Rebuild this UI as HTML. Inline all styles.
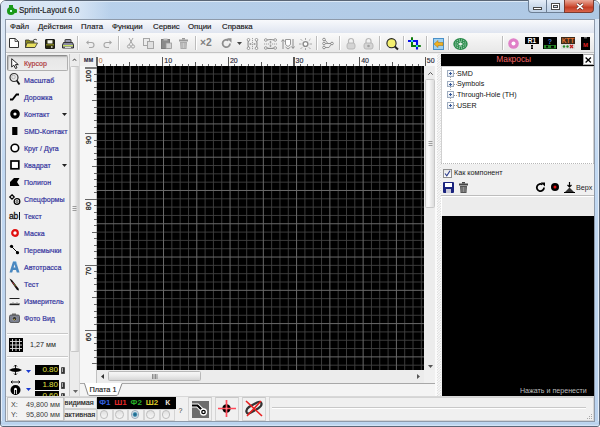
<!DOCTYPE html>
<html><head><meta charset="utf-8">
<style>
*{box-sizing:border-box;margin:0;padding:0}
html,body{width:600px;height:427px;overflow:hidden;background:#fff}
body{position:relative;font-family:"Liberation Sans",sans-serif}
.a{position:absolute}
.t{position:absolute;white-space:nowrap;line-height:1}
svg{overflow:visible}
</style></head><body>
<div class="a" style="left:0px;top:0px;width:600px;height:427px;background:linear-gradient(#dce8f6 0,#d4e3f4 100px,#c2d9f2 160px,#bad2ee 427px);border:1px solid #5a6676;border-radius:6px 6px 3px 3px;box-shadow:inset 1px 0 0 #e6eef8,inset -1px 0 0 #e6eef8"></div>
<div class="a" style="left:1px;top:1px;width:598px;height:18px;background:linear-gradient(90deg,#bad2ec,#b4cde8 50%,#aec8e4);border-radius:5px 5px 0 0;box-shadow:inset 0 1px 0 #dce9f6"></div>
<div class="a" style="left:1px;top:421px;width:598px;height:5px;background:linear-gradient(#c4dcf2,#b6d0ec 60%,#dceaf8);border-radius:0 0 2px 2px"></div>
<div class="a" style="left:1px;top:1px;width:110px;height:18px;background:linear-gradient(90deg,rgba(220,232,246,0.9) 0,rgba(220,232,246,0.85) 70%,rgba(220,232,246,0) 100%);border-radius:5px 0 0 0"></div>
<svg class="a" style="left:5.5px;top:5px" width="12" height="10" viewBox="0 0 12 10"><circle cx="5" cy="6" r="4" fill="#1a9a1a"/><rect x="3" y="0" width="4" height="4" fill="#1a9a1a"/><rect x="7" y="4" width="4" height="4" rx="1" fill="#1a9a1a"/><rect x="4" y="5" width="2" height="2" fill="#cfe"/></svg>
<div class="t" style="left:19.2px;top:5.9px;font-size:9px;color:#1e1e1e;-webkit-text-stroke:0.15px #111;transform:scaleX(0.88);transform-origin:left">Sprint-Layout 6.0</div>
<div class="a" style="left:528px;top:0px;width:37px;height:13px;border:1px solid #6d7f95;border-top:none;border-radius:0 0 0 4px;background:linear-gradient(#e6eef8,#cddbeb 50%,#c0d2e8)"></div>
<div class="a" style="left:546px;top:0px;width:1px;height:13px;background:#6d7f95"></div>
<div class="a" style="left:564px;top:0px;width:30px;height:13px;border:1px solid #7a3b30;border-top:none;border-radius:0 0 4px 0;background:linear-gradient(#eaa898,#d0553c 50%,#c23c24 60%,#d9644a)"></div>
<div class="a" style="left:533px;top:7px;width:9px;height:3px;background:#fff;border:1px solid #4a4a4a"></div>
<div class="a" style="left:551px;top:3px;width:9px;height:7px;border:1px solid #4a4a4a;background:#fff"></div>
<div class="a" style="left:553px;top:5px;width:5px;height:3px;border:1px solid #4a4a4a;background:#cfdcec"></div>
<svg class="a" style="left:575.5px;top:3.2px" width="8" height="7" viewBox="0 0 8 7"><path d="M1 0.8L7 6.2M7 0.8L1 6.2" stroke="#5a1a10" stroke-width="2.8"/><path d="M1 0.8L7 6.2M7 0.8L1 6.2" stroke="#fff" stroke-width="1.7"/></svg>
<div class="a" style="left:4.5px;top:18.5px;width:590.5px;height:403px;background:#f0f0f0;border:1px solid #8e9aaa;box-shadow:inset 1px 0 0 #fff,inset 0 -1px 0 #fff"></div>
<div class="a" style="left:6px;top:20px;width:588px;height:13px;background:linear-gradient(#f8f9fc,#e9edf5 60%,#dfe5f0)"></div>
<div class="t" style="left:10px;top:22.6px;font-size:7.8px;color:#161616;-webkit-text-stroke:0.15px #161616">Файл</div>
<div class="t" style="left:38px;top:22.6px;font-size:7.8px;color:#161616;-webkit-text-stroke:0.15px #161616">Действия</div>
<div class="t" style="left:81px;top:22.6px;font-size:7.8px;color:#161616;-webkit-text-stroke:0.15px #161616">Плата</div>
<div class="t" style="left:112px;top:22.6px;font-size:7.8px;color:#161616;-webkit-text-stroke:0.15px #161616">Функции</div>
<div class="t" style="left:153px;top:22.6px;font-size:7.8px;color:#161616;-webkit-text-stroke:0.15px #161616">Сервис</div>
<div class="t" style="left:188px;top:22.6px;font-size:7.8px;color:#161616;-webkit-text-stroke:0.15px #161616">Опции</div>
<div class="t" style="left:222px;top:22.6px;font-size:7.8px;color:#161616;-webkit-text-stroke:0.15px #161616">Справка</div>
<div class="a" style="left:6px;top:33px;width:588px;height:20px;background:linear-gradient(#fafafa,#f0f0f0 50%,#e8e8e8);border-bottom:1px solid #c4c4c4"></div>
<div class="a" style="left:77.0px;top:36px;width:1px;height:14px;background:#bcbcbc"></div>
<div class="a" style="left:78.0px;top:36px;width:1px;height:14px;background:#fff"></div>
<div class="a" style="left:118.0px;top:36px;width:1px;height:14px;background:#bcbcbc"></div>
<div class="a" style="left:119.0px;top:36px;width:1px;height:14px;background:#fff"></div>
<div class="a" style="left:194.5px;top:36px;width:1px;height:14px;background:#bcbcbc"></div>
<div class="a" style="left:195.5px;top:36px;width:1px;height:14px;background:#fff"></div>
<div class="a" style="left:315.5px;top:36px;width:1px;height:14px;background:#bcbcbc"></div>
<div class="a" style="left:316.5px;top:36px;width:1px;height:14px;background:#fff"></div>
<div class="a" style="left:338.5px;top:36px;width:1px;height:14px;background:#bcbcbc"></div>
<div class="a" style="left:339.5px;top:36px;width:1px;height:14px;background:#fff"></div>
<div class="a" style="left:378.5px;top:36px;width:1px;height:14px;background:#bcbcbc"></div>
<div class="a" style="left:379.5px;top:36px;width:1px;height:14px;background:#fff"></div>
<div class="a" style="left:402.5px;top:36px;width:1px;height:14px;background:#bcbcbc"></div>
<div class="a" style="left:403.5px;top:36px;width:1px;height:14px;background:#fff"></div>
<div class="a" style="left:425.5px;top:36px;width:1px;height:14px;background:#bcbcbc"></div>
<div class="a" style="left:426.5px;top:36px;width:1px;height:14px;background:#fff"></div>
<div class="a" style="left:447.5px;top:36px;width:1px;height:14px;background:#bcbcbc"></div>
<div class="a" style="left:448.5px;top:36px;width:1px;height:14px;background:#fff"></div>
<div class="a" style="left:502.0px;top:36px;width:1px;height:14px;background:#bcbcbc"></div>
<div class="a" style="left:503.0px;top:36px;width:1px;height:14px;background:#fff"></div>
<svg class="a" style="left:9px;top:38px" width="10" height="10" viewBox="0 0 10 10"><path d="M0.5 0.5H6L9.5 3.5V9.5H0.5Z" fill="#fff" stroke="#333" stroke-width="1"/><path d="M6 0.5V3.5H9.5" fill="none" stroke="#333" stroke-width="0.8"/></svg>
<svg class="a" style="left:25px;top:38px" width="13" height="10" viewBox="0 0 13 10"><path d="M0.5 2H4L5 3H9V9.5H0.5Z" fill="#8a8a20" stroke="#333" stroke-width="0.8"/><path d="M2 5H12.5L10 9.5H0.5Z" fill="#e8e060" stroke="#333" stroke-width="0.8"/><path d="M8 2.5Q10 0 12 2" stroke="#333" fill="none" stroke-width="0.9"/></svg>
<svg class="a" style="left:44.5px;top:38.5px" width="10" height="10" viewBox="0 0 10 10"><rect x="0.5" y="0.5" width="9" height="9" rx="0.5" fill="#2a2a10" stroke="#1a1a1a" stroke-width="1"/><rect x="2.5" y="1.2" width="5" height="3.3" fill="#f4f4e8"/><rect x="1" y="5.2" width="8" height="1.2" fill="#8a8a20"/><rect x="6" y="7.3" width="1.5" height="1.4" fill="#eee"/></svg>
<svg class="a" style="left:61.5px;top:38.5px" width="12" height="10" viewBox="0 0 12 10"><path d="M3 3V1Q3 0.5 3.5 0.5H8.5Q9 0.5 9 1V3" fill="#9a9ab0" stroke="#333" stroke-width="0.9"/><path d="M1.5 3.5H10.5L11.5 6V9H0.5V6Z" fill="#8a8aa0" stroke="#222" stroke-width="0.9"/><rect x="1" y="6" width="10" height="1.3" fill="#c8e060"/><rect x="3" y="8" width="6" height="1" fill="#ddd"/></svg>
<svg class="a" style="left:86px;top:39.5px" width="9" height="8" viewBox="0 0 9 8"><path d="M2 2.5H5.5A2.5 2.5 0 0 1 5.5 7.5H3" stroke="#a6a6a6" stroke-width="1.1" fill="none"/><path d="M0 2.5L2.5 0.3V4.7Z" fill="#a6a6a6"/></svg>
<svg class="a" style="left:103px;top:39.5px" width="9" height="8" viewBox="0 0 9 8"><path d="M7 2.5H3.5A2.5 2.5 0 0 0 3.5 7.5H6" stroke="#a6a6a6" stroke-width="1.1" fill="none"/><path d="M9 2.5L6.5 0.3V4.7Z" fill="#a6a6a6"/></svg>
<svg class="a" style="left:127px;top:38px" width="8" height="11" viewBox="0 0 8 11"><path d="M2 0L6 7M6 0L2 7" stroke="#a6a6a6" stroke-width="1"/><circle cx="2" cy="8.5" r="1.6" fill="none" stroke="#a6a6a6" stroke-width="1"/><circle cx="6" cy="8.5" r="1.6" fill="none" stroke="#a6a6a6" stroke-width="1"/></svg>
<svg class="a" style="left:143px;top:38px" width="11" height="11" viewBox="0 0 11 11"><rect x="0.5" y="0.5" width="6" height="7" fill="#ececec" stroke="#a6a6a6"/><rect x="4.5" y="3.5" width="6" height="7" fill="#e0e0e0" stroke="#a6a6a6"/></svg>
<svg class="a" style="left:161px;top:38px" width="11" height="11" viewBox="0 0 11 11"><rect x="0.5" y="1.5" width="8" height="9" fill="#8a8a8a" stroke="#7a7a7a"/><rect x="2.5" y="0.5" width="4" height="2" fill="#bbb"/><rect x="5" y="5" width="5.5" height="5.5" fill="#d4d4d4" stroke="#999" stroke-width="0.8"/></svg>
<svg class="a" style="left:179px;top:38px" width="9" height="11" viewBox="0 0 9 11"><rect x="3" y="0" width="3" height="1.5" fill="#999"/><rect x="0" y="1.5" width="9" height="2" fill="#999"/><path d="M1 4H8L7.5 11H1.5Z" fill="#aaa"/><path d="M3 5V10M4.5 5V10M6 5V10" stroke="#e0e0e0" stroke-width="0.6"/></svg>
<div class="t" style="left:200px;top:38.3px;font-size:10.3px;font-weight:bold;color:#808080">×2</div>
<svg class="a" style="left:221px;top:38px" width="11" height="11" viewBox="0 0 11 11"><path d="M9 5.5A3.7 3.7 0 1 1 7.5 2.5" stroke="#8e8e8e" stroke-width="1.8" fill="none"/><path d="M6 0.3L10.5 0.3L10.5 4.8Z" fill="#8e8e8e"/></svg>
<svg class="a" style="left:237px;top:42px" width="5" height="3" viewBox="0 0 5 3"><path d="M0 0H5L2.5 3Z" fill="#444"/></svg>
<svg class="a" style="left:246px;top:38px" width="13" height="12" viewBox="0 0 13 12"><path d="M6.5 0V12" stroke="#8c8c8c" stroke-width="0.8" stroke-dasharray="1.2 0.8"/><path d="M2.5 2.5Q1.5 6 2.5 9.5M10.5 2.5Q11.5 6 10.5 9.5" stroke="#8c8c8c" stroke-width="1.1" fill="none"/><circle cx="2.5" cy="1.8" r="1.3" fill="#fff" stroke="#8c8c8c" stroke-width="0.9"/><circle cx="2.5" cy="10.2" r="1.3" fill="#fff" stroke="#8c8c8c" stroke-width="0.9"/><circle cx="10.5" cy="1.8" r="1.3" fill="#fff" stroke="#8c8c8c" stroke-width="0.9"/><circle cx="10.5" cy="10.2" r="1.3" fill="#fff" stroke="#8c8c8c" stroke-width="0.9"/><path d="M3.8 6H5.6M7.4 6H9.2M4.6 5L3.8 6L4.6 7M8.4 5L9.2 6L8.4 7" stroke="#8c8c8c" stroke-width="0.8" fill="none"/></svg>
<svg class="a" style="left:264px;top:38px" width="13" height="12" viewBox="0 0 13 12"><path d="M0 6H13" stroke="#8c8c8c" stroke-width="0.8" stroke-dasharray="1.2 0.8"/><path d="M2.5 2Q6.5 1 10.5 2M2.5 10Q6.5 11 10.5 10" stroke="#8c8c8c" stroke-width="1.1" fill="none"/><circle cx="1.8" cy="2" r="1.3" fill="#fff" stroke="#8c8c8c" stroke-width="0.9"/><circle cx="11.2" cy="2" r="1.3" fill="#fff" stroke="#8c8c8c" stroke-width="0.9"/><circle cx="1.8" cy="10" r="1.3" fill="#fff" stroke="#8c8c8c" stroke-width="0.9"/><circle cx="11.2" cy="10" r="1.3" fill="#fff" stroke="#8c8c8c" stroke-width="0.9"/><path d="M6.5 3.3V5M6.5 7V8.7M5.5 4.1L6.5 3.3L7.5 4.1M5.5 7.9L6.5 8.7L7.5 7.9" stroke="#8c8c8c" stroke-width="0.8" fill="none"/></svg>
<svg class="a" style="left:281px;top:38px" width="14" height="12" viewBox="0 0 14 12"><path d="M2 11V2M0.5 3.5L2 1.5L3.5 3.5M12 1V10M10.5 8.5L12 10.5L13.5 8.5" stroke="#8c8c8c" stroke-width="1" fill="none"/><path d="M4.5 1.5H9.5V6.5L7 8.5L4.5 6.5Z" fill="#fff" stroke="#8c8c8c" stroke-width="0.9"/><path d="M4.5 9L7 11L9.5 9" stroke="#8c8c8c" stroke-width="0.9" fill="none"/></svg>
<svg class="a" style="left:299px;top:38px" width="13" height="12" viewBox="0 0 13 12"><circle cx="6.5" cy="6" r="2.4" fill="#fff" stroke="#8c8c8c" stroke-width="1.4"/><path d="M6.5 0V2M6.5 10V12M0 6H2.5M10.5 6H13M1.5 1L3.2 2.7M11.5 1L9.8 2.7M1.5 11L3.2 9.3M11.5 11L9.8 9.3" stroke="#a0a0a0" stroke-width="0.9"/></svg>
<svg class="a" style="left:322px;top:38px" width="12" height="11" viewBox="0 0 12 11"><circle cx="2" cy="1.5" r="1.3" fill="#fff" stroke="#8c8c8c"/><circle cx="2" cy="5.5" r="1.3" fill="#fff" stroke="#8c8c8c"/><circle cx="2" cy="9.5" r="1.3" fill="#fff" stroke="#8c8c8c"/><circle cx="10" cy="5.5" r="1.3" fill="#fff" stroke="#8c8c8c"/><path d="M3 2L6 5.5H9M3.3 5.5H9M3 9.5H7L9 6.5" stroke="#8c8c8c" fill="none" stroke-width="0.9"/></svg>
<svg class="a" style="left:346px;top:38px" width="10" height="11" viewBox="0 0 10 11"><path d="M2.5 5V3A2.5 2.5 0 0 1 7.5 3V5" stroke="#b8b8b8" stroke-width="1.2" fill="none"/><rect x="1" y="5" width="8" height="6" rx="2" fill="#d4d4d4" stroke="#b0b0b0" stroke-width="0.8"/></svg>
<svg class="a" style="left:363px;top:38px" width="11" height="11" viewBox="0 0 11 11"><path d="M3 5V3A2.5 2.5 0 0 1 8 3V5" stroke="#b8b8b8" stroke-width="1.2" fill="none"/><rect x="1" y="5" width="9" height="6" rx="2" fill="#d4d4d4" stroke="#b0b0b0" stroke-width="0.8"/><circle cx="5.5" cy="8" r="1.3" fill="#a0a0a0"/></svg>
<svg class="a" style="left:386px;top:38px" width="13" height="12" viewBox="0 0 13 12"><circle cx="5.5" cy="5.2" r="4.6" fill="#f4f070" stroke="#222" stroke-width="1.1"/><path d="M8.7 8.5L12 11.5" stroke="#222" stroke-width="2"/></svg>
<svg class="a" style="left:404px;top:35px" width="22" height="16" viewBox="0 0 22 16"><path d="M8 2.3V11H16.8" stroke="#0a7a0a" stroke-width="2" fill="none"/><path d="M4 6H13V14.6" stroke="#0a10e8" stroke-width="2.1" fill="none"/><rect x="7" y="5" width="2" height="2" fill="#40d0f0"/><rect x="12" y="10" width="2" height="2" fill="#40e0d0"/></svg>
<svg class="a" style="left:433px;top:38px" width="11" height="12" viewBox="0 0 11 12"><rect x="0.5" y="0.5" width="10" height="11" fill="#9ed0f0" stroke="#4a90c8" stroke-width="1"/><path d="M1 6L5 2.5V4.5H10V7.5H5V9.5Z" fill="#f0b020" stroke="#a07010" stroke-width="0.5"/></svg>
<svg class="a" style="left:453px;top:38px" width="15" height="12" viewBox="0 0 15 12"><ellipse cx="7.5" cy="6" rx="7.2" ry="6" fill="#2a8a4a"/><circle cx="12.70" cy="6.00" r="0.55" fill="#b8e0c8"/><circle cx="12.19" cy="7.92" r="0.55" fill="#b8e0c8"/><circle cx="10.74" cy="9.46" r="0.55" fill="#b8e0c8"/><circle cx="8.66" cy="10.31" r="0.55" fill="#b8e0c8"/><circle cx="6.34" cy="10.31" r="0.55" fill="#b8e0c8"/><circle cx="4.26" cy="9.46" r="0.55" fill="#b8e0c8"/><circle cx="2.81" cy="7.92" r="0.55" fill="#b8e0c8"/><circle cx="2.30" cy="6.00" r="0.55" fill="#b8e0c8"/><circle cx="2.81" cy="4.08" r="0.55" fill="#b8e0c8"/><circle cx="4.26" cy="2.54" r="0.55" fill="#b8e0c8"/><circle cx="6.34" cy="1.69" r="0.55" fill="#b8e0c8"/><circle cx="8.66" cy="1.69" r="0.55" fill="#b8e0c8"/><circle cx="10.74" cy="2.54" r="0.55" fill="#b8e0c8"/><circle cx="12.19" cy="4.08" r="0.55" fill="#b8e0c8"/><circle cx="11.10" cy="6.00" r="0.55" fill="#b8e0c8"/><circle cx="10.41" cy="7.80" r="0.55" fill="#b8e0c8"/><circle cx="8.61" cy="8.91" r="0.55" fill="#b8e0c8"/><circle cx="6.39" cy="8.91" r="0.55" fill="#b8e0c8"/><circle cx="4.59" cy="7.80" r="0.55" fill="#b8e0c8"/><circle cx="3.90" cy="6.00" r="0.55" fill="#b8e0c8"/><circle cx="4.59" cy="4.20" r="0.55" fill="#b8e0c8"/><circle cx="6.39" cy="3.09" r="0.55" fill="#b8e0c8"/><circle cx="8.61" cy="3.09" r="0.55" fill="#b8e0c8"/><circle cx="10.41" cy="4.20" r="0.55" fill="#b8e0c8"/><circle cx="7.5" cy="6" r="1.6" fill="#e8f4ec"/><path d="M7.5 3.5V4.3M7.5 7.7V8.5M5 6H5.8M9.2 6H10" stroke="#e8f4ec" stroke-width="0.8"/></svg>
<svg class="a" style="left:508px;top:38px" width="11" height="11" viewBox="0 0 11 11"><circle cx="5.5" cy="5.5" r="5.3" fill="#e080c8"/><circle cx="5.5" cy="5.5" r="2" fill="#fff"/></svg>
<svg class="a" style="left:525px;top:37px" width="14" height="12" viewBox="0 0 14 12"><rect x="0" y="0" width="14" height="7" fill="#000"/><text x="7" y="6.2" font-family="Liberation Sans" font-size="6.5" font-weight="bold" fill="#fff" text-anchor="middle">R1</text><rect x="6" y="8" width="2" height="4" fill="#000"/><rect x="6" y="9.5" width="2" height="1" fill="#888"/></svg>
<svg class="a" style="left:543px;top:37px" width="14" height="12" viewBox="0 0 14 12"><rect x="0" y="0" width="14" height="12" fill="#000"/><text x="7" y="6.5" font-family="Liberation Sans" font-size="7" font-weight="bold" fill="#4a80d0" text-anchor="middle">?</text><rect x="1" y="8" width="12" height="3.5" fill="#2a8a2a"/><circle cx="4" cy="9.7" r="1.1" fill="#000"/><rect x="8" y="8.8" width="3" height="2" fill="#000"/></svg>
<svg class="a" style="left:561px;top:37px" width="14" height="12" viewBox="0 0 14 12"><rect x="0" y="0" width="14" height="7" fill="#3a2a1a"/><text x="7" y="6.2" font-family="Liberation Sans" font-size="6.5" font-weight="bold" fill="#e07030" text-anchor="middle">KTT</text><rect x="0" y="7" width="14" height="5" fill="#ddd"/><circle cx="3" cy="9.5" r="1.2" fill="#2a8a2a"/><circle cx="6.5" cy="9.5" r="1.2" fill="#2a8a2a"/><path d="M9 8L12 11M12 8L9 11" stroke="#c02020" stroke-width="1.3"/></svg>
<svg class="a" style="left:581px;top:37px" width="9" height="13" viewBox="0 0 9 13"><rect x="0" y="0" width="9" height="13" fill="#000"/><rect x="3" y="0" width="3" height="1.5" fill="#666"/><text x="4.5" y="9.5" font-family="Liberation Sans" font-size="6" font-weight="bold" fill="#e02020" text-anchor="middle">M</text></svg>
<div class="a" style="left:6px;top:54px;width:63px;height:342px;background:#f0f0f0"></div>
<div class="a" style="left:69px;top:54px;width:11px;height:342px;background:#ececec;border-left:1px solid #c4c4c4"></div>
<div class="a" style="left:70px;top:66px;width:9.5px;height:286px;background:linear-gradient(90deg,#f6f6f6,#f2f2f2 40%,#dadada 75%,#cfcfcf);border:1px solid #c8c8c8;border-radius:1.5px"></div>
<svg class="a" style="left:72px;top:57.5px" width="5" height="3" viewBox="0 0 5 3"><path d="M0.2 2.8L2.5 0.4L4.8 2.8L3.8 2.8L2.5 1.5L1.2 2.8Z" fill="#444"/></svg>
<svg class="a" style="left:72.5px;top:389.5px" width="5" height="3" viewBox="0 0 5 3"><path d="M0 0H5L2.5 3Z" fill="#666"/></svg>
<div class="a" style="left:79px;top:54px;width:1px;height:342px;background:#d8d8d8"></div>
<svg class="a" style="left:72px;top:206px" width="5" height="5" viewBox="0 0 5 5"><path d="M0.5 0.5H4.5M0.5 2.5H4.5M0.5 4.5H4.5" stroke="#888" stroke-width="0.8"/></svg>
<div class="a" style="left:7px;top:55.3px;width:61.3px;height:15.4px;border:1px solid #8c8c8c;border-bottom-color:#b0b0b0;border-right-color:#b0b0b0;border-radius:2px;background:linear-gradient(#dcdcdc,#e8e8e8 30%,#ececec);box-shadow:inset 1px 1px 1px rgba(0,0,0,0.18)"></div>
<div class="t" style="left:23.5px;top:59.9px;font-size:7.6px;color:#b03c40;-webkit-text-stroke:0.22px #b03c40;transform:scaleX(0.93);transform-origin:left">Курсор</div>
<div class="t" style="left:23.5px;top:76.89px;font-size:7.6px;color:#3838a0;-webkit-text-stroke:0.22px #3838a0;transform:scaleX(0.93);transform-origin:left">Масштаб</div>
<div class="t" style="left:23.5px;top:93.88px;font-size:7.6px;color:#3838a0;-webkit-text-stroke:0.22px #3838a0;transform:scaleX(0.93);transform-origin:left">Дорожка</div>
<div class="t" style="left:23.5px;top:110.87px;font-size:7.6px;color:#3838a0;-webkit-text-stroke:0.22px #3838a0;transform:scaleX(0.93);transform-origin:left">Контакт</div>
<div class="t" style="left:23.5px;top:127.86px;font-size:7.6px;color:#3838a0;-webkit-text-stroke:0.22px #3838a0;transform:scaleX(0.93);transform-origin:left">SMD-Контакт</div>
<div class="t" style="left:23.5px;top:144.85px;font-size:7.6px;color:#3838a0;-webkit-text-stroke:0.22px #3838a0;transform:scaleX(0.93);transform-origin:left">Круг / Дуга</div>
<div class="t" style="left:23.5px;top:161.84px;font-size:7.6px;color:#3838a0;-webkit-text-stroke:0.22px #3838a0;transform:scaleX(0.93);transform-origin:left">Квадрат</div>
<div class="t" style="left:23.5px;top:178.83px;font-size:7.6px;color:#3838a0;-webkit-text-stroke:0.22px #3838a0;transform:scaleX(0.93);transform-origin:left">Полигон</div>
<div class="t" style="left:23.5px;top:195.82px;font-size:7.6px;color:#3838a0;-webkit-text-stroke:0.22px #3838a0;transform:scaleX(0.93);transform-origin:left">Спецформы</div>
<div class="t" style="left:23.5px;top:212.81px;font-size:7.6px;color:#3838a0;-webkit-text-stroke:0.22px #3838a0;transform:scaleX(0.93);transform-origin:left">Текст</div>
<div class="t" style="left:23.5px;top:229.8px;font-size:7.6px;color:#3838a0;-webkit-text-stroke:0.22px #3838a0;transform:scaleX(0.93);transform-origin:left">Маска</div>
<div class="t" style="left:23.5px;top:246.79px;font-size:7.6px;color:#3838a0;-webkit-text-stroke:0.22px #3838a0;transform:scaleX(0.93);transform-origin:left">Перемычки</div>
<div class="t" style="left:23.5px;top:263.78px;font-size:7.6px;color:#3838a0;-webkit-text-stroke:0.22px #3838a0;transform:scaleX(0.93);transform-origin:left">Автотрасса</div>
<div class="t" style="left:23.5px;top:280.77px;font-size:7.6px;color:#3838a0;-webkit-text-stroke:0.22px #3838a0;transform:scaleX(0.93);transform-origin:left">Тест</div>
<div class="t" style="left:23.5px;top:297.76px;font-size:7.6px;color:#3838a0;-webkit-text-stroke:0.22px #3838a0;transform:scaleX(0.93);transform-origin:left">Измеритель</div>
<div class="t" style="left:23.5px;top:314.75px;font-size:7.6px;color:#3838a0;-webkit-text-stroke:0.22px #3838a0;transform:scaleX(0.93);transform-origin:left">Фото Вид</div>
<svg class="a" style="left:11px;top:58px" width="8" height="11" viewBox="0 0 8 11"><path d="M0.7 0.7V9L2.8 7.2L4.5 10.5L6 9.8L4.4 6.6H7.3Z" fill="#fff" stroke="#222" stroke-width="1"/></svg>
<svg class="a" style="left:9px;top:72px" width="11" height="14" viewBox="0 0 11 14"><circle cx="5" cy="5.5" r="4" fill="#e8e8e8" stroke="#333" stroke-width="1.2"/><circle cx="4.5" cy="5" r="1.8" fill="none" stroke="#999" stroke-width="0.6"/><path d="M7.8 8.5L10.5 12.5" stroke="#111" stroke-width="1.8"/></svg>
<svg class="a" style="left:9px;top:93px" width="11" height="8" viewBox="0 0 11 8"><path d="M1 6.5H3.5L7.5 1.5H10" stroke="#000" stroke-width="1.8" fill="none"/></svg>
<svg class="a" style="left:10px;top:109px" width="10" height="10" viewBox="0 0 10 10"><circle cx="5" cy="5" r="3.2" fill="#fff" stroke="#000" stroke-width="3.2"/></svg>
<svg class="a" style="left:12px;top:127px" width="6" height="8" viewBox="0 0 6 8"><rect x="0.2" y="0" width="5.2" height="8" fill="#000"/></svg>
<svg class="a" style="left:10px;top:143px" width="10" height="10" viewBox="0 0 10 10"><circle cx="4.9" cy="5" r="3.8" fill="#fff" stroke="#000" stroke-width="1.6"/></svg>
<svg class="a" style="left:10px;top:160px" width="10" height="10" viewBox="0 0 10 10"><rect x="1" y="1" width="7.8" height="7.8" fill="#fff" stroke="#000" stroke-width="1.7"/></svg>
<svg class="a" style="left:9px;top:177px" width="11" height="10" viewBox="0 0 11 10"><path d="M1 5L5 1H10.5L8 5L10.5 9H1Z" fill="#000"/></svg>
<svg class="a" style="left:9px;top:194px" width="12" height="11" viewBox="0 0 12 11"><path d="M3 0.8L5.2 3L3 5.2L0.8 3Z" fill="#fff" stroke="#000" stroke-width="1.3"/><circle cx="8" cy="7.5" r="2.8" fill="#fff" stroke="#000" stroke-width="1.3"/><circle cx="8" cy="7.5" r="1" fill="none" stroke="#000" stroke-width="0.7"/></svg>
<div class="t" style="left:9px;top:211.8px;font-size:8.5px;color:#111;letter-spacing:-0.3px;-webkit-text-stroke:0.3px #111">ab</div>
<div class="a" style="left:19px;top:212px;width:1px;height:8px;background:#111"></div>
<svg class="a" style="left:11px;top:229px" width="8" height="8" viewBox="0 0 8 8"><circle cx="4" cy="4" r="2.8" fill="#fff" stroke="#e01010" stroke-width="2.2"/></svg>
<svg class="a" style="left:9px;top:244px" width="11" height="11" viewBox="0 0 11 11"><path d="M2.5 2.5L8.5 8.5" stroke="#000" stroke-width="1"/><circle cx="2.5" cy="2.3" r="1.6" fill="#000"/><circle cx="8.5" cy="8.7" r="1.6" fill="#000"/></svg>
<svg class="a" style="left:9px;top:261px" width="11" height="12" viewBox="0 0 11 12"><path d="M0.5 11.5L4 0.5H7L10.5 11.5H7.8L7 9H4L3.2 11.5Z" fill="#4a88c0"/><path d="M4.6 6.5H6.4L5.5 3.3Z" fill="#f0f0f0"/><path d="M4 0.5H7L8 4" stroke="#8ac0e8" stroke-width="0.6" fill="none"/></svg>
<svg class="a" style="left:9px;top:278px" width="11" height="13" viewBox="0 0 11 13"><path d="M0.5 0.5L3 2L9.5 10.5L10 12.5L8 12L2 3.5Z" fill="#111"/><path d="M3.5 4.5L7 8.5" stroke="#c03030" stroke-width="1"/><circle cx="6" cy="7" r="0.7" fill="#30a030"/></svg>
<svg class="a" style="left:9px;top:297px" width="11" height="9" viewBox="0 0 11 9"><path d="M0.5 1.5H10.5" stroke="#222" stroke-width="1"/><path d="M0.5 7.5H10.5" stroke="#222" stroke-width="1.3"/><path d="M2 6V7M4 5.5V7M6 6V7M8 5.5V7M10 6V7" stroke="#222" stroke-width="0.8"/></svg>
<svg class="a" style="left:9px;top:313px" width="11" height="10" viewBox="0 0 11 10"><rect x="0.5" y="2" width="10" height="7.5" rx="1.5" fill="#7a7f90" stroke="#444" stroke-width="0.8"/><rect x="3" y="0.5" width="4" height="2" fill="#666"/><circle cx="5.5" cy="5.7" r="2.2" fill="#333" stroke="#bbb" stroke-width="0.6"/><circle cx="5.2" cy="6.5" r="0.7" fill="#e0c040"/></svg>
<svg class="a" style="left:61.5px;top:113.0px" width="5" height="3" viewBox="0 0 5 3"><path d="M0 0H5L2.5 3Z" fill="#222"/></svg>
<svg class="a" style="left:61.5px;top:164.1px" width="5" height="3" viewBox="0 0 5 3"><path d="M0 0H5L2.5 3Z" fill="#222"/></svg>
<div class="a" style="left:7px;top:333px;width:61px;height:1px;background:#c8c8c8"></div>
<div class="a" style="left:7px;top:334px;width:61px;height:1px;background:#fff"></div>
<div class="a" style="left:7px;top:356px;width:61px;height:1px;background:#c8c8c8"></div>
<div class="a" style="left:7px;top:357px;width:61px;height:1px;background:#fff"></div>
<svg class="a" style="left:9px;top:338px" width="14" height="14" viewBox="0 0 14 14"><rect width="14" height="14" fill="#000"/><path d="M3.5 1V13M7 1V13M10.5 1V13M1 3.5H13M1 7H13M1 10.5H13" stroke="#ddd" stroke-width="0.9"/></svg>
<div class="t" style="left:30px;top:341.3px;font-size:7.2px;color:#222">1,27 мм</div>
<div class="a" style="left:35px;top:365px;width:24px;height:10px;background:#000"></div>
<div class="t" style="left:35px;top:366.2px;width:23px;text-align:right;font-size:8px;color:#e0e040">0.80</div>
<div class="a" style="left:61px;top:366.5px;width:3.5px;height:7px;background:#333;border-radius:1.5px;box-shadow:inset 0 0 0 0.8px #555"></div>
<div class="a" style="left:62.2px;top:368px;width:1.1px;height:4px;background:#aaa"></div>
<div class="a" style="left:35px;top:380px;width:24px;height:10px;background:#000"></div>
<div class="t" style="left:35px;top:381.2px;width:23px;text-align:right;font-size:8px;color:#e0e040">1.80</div>
<div class="a" style="left:61px;top:381.5px;width:3.5px;height:7px;background:#333;border-radius:1.5px;box-shadow:inset 0 0 0 0.8px #555"></div>
<div class="a" style="left:62.2px;top:383px;width:1.1px;height:4px;background:#aaa"></div>
<div class="a" style="left:35px;top:391px;width:24px;height:10px;background:#000"></div>
<div class="t" style="left:35px;top:392.2px;width:23px;text-align:right;font-size:8px;color:#e0e040">0.60</div>
<div class="a" style="left:61px;top:392.5px;width:3.5px;height:7px;background:#333;border-radius:1.5px;box-shadow:inset 0 0 0 0.8px #555"></div>
<div class="a" style="left:62.2px;top:394px;width:1.1px;height:4px;background:#aaa"></div>
<svg class="a" style="left:9px;top:365px" width="13" height="10" viewBox="0 0 13 10"><path d="M0 5Q3 3 6.5 3Q10 3 13 5Q10 7 6.5 7Q3 7 0 5Z" fill="#000"/><path d="M6.5 0V3M6.5 7V10M5 1.5L6.5 0L8 1.5M5 8.5L6.5 10L8 8.5" stroke="#000" stroke-width="0.9" fill="none"/></svg>
<svg class="a" style="left:25.5px;top:369.5px" width="5" height="3" viewBox="0 0 5 3"><path d="M0 0H5L2.5 3Z" fill="#1a3ad0"/></svg>
<svg class="a" style="left:25.5px;top:387.5px" width="5" height="3" viewBox="0 0 5 3"><path d="M0 0H5L2.5 3Z" fill="#1a3ad0"/></svg>
<svg class="a" style="left:9px;top:380px" width="13" height="17" viewBox="0 0 13 17"><path d="M2 2H11M3.5 0.7L2 2L3.5 3.3M9.5 0.7L11 2L9.5 3.3" stroke="#000" stroke-width="0.9" fill="none"/><circle cx="6.5" cy="10" r="5" fill="#000"/><path d="M5 14V9.3Q5 7.8 6.5 7.8Q8 7.8 8 9.3V14Z" fill="#fff"/><rect x="5.8" y="10" width="1.4" height="5" fill="#000"/></svg>
<div class="a" style="left:80px;top:54px;width:357px;height:330px;background:#f0f0f0"></div>
<div class="a" style="left:97px;top:54px;width:340px;height:12px;background:#f8f8f8"></div>
<div class="a" style="left:80px;top:66px;width:17px;height:316.5px;background:#f6f6f6;border-right:1px solid #c0c0c0"></div>
<div class="t" style="left:83.8px;top:57.3px;font-size:6.5px;font-weight:bold;color:#2a2a40">мм</div>
<div class="a" style="left:85px;top:67.3px;width:12px;height:1.6px;background:#7a7a7a"></div>
<div class="a" style="left:96.4px;top:57px;width:1.4px;height:9px;background:#666"></div>
<svg class="a" style="left:97px;top:66px;overflow:hidden" width="327" height="304" viewBox="0 0 327 304"><rect width="327" height="304" fill="#000"/><path d="M8.30 0V304M16.62 0V304M24.93 0V304M41.57 0V304M49.89 0V304M58.20 0V304M74.84 0V304M83.15 0V304M91.47 0V304M108.10 0V304M116.42 0V304M124.74 0V304M141.37 0V304M149.69 0V304M158.01 0V304M174.64 0V304M182.96 0V304M191.27 0V304M207.91 0V304M216.23 0V304M224.54 0V304M241.18 0V304M249.49 0V304M257.81 0V304M274.44 0V304M282.76 0V304M291.08 0V304M307.71 0V304M316.03 0V304M324.35 0V304M0 8.00H327M0 16.32H327M0 32.96H327M0 41.28H327M0 49.60H327M0 66.24H327M0 74.56H327M0 82.88H327M0 99.52H327M0 107.84H327M0 116.16H327M0 132.80H327M0 141.12H327M0 149.44H327M0 166.08H327M0 174.40H327M0 182.72H327M0 199.36H327M0 207.68H327M0 216.00H327M0 232.64H327M0 240.96H327M0 249.28H327M0 265.92H327M0 274.24H327M0 282.56H327M0 299.20H327" stroke="#424242" stroke-width="0.9" fill="none"/><path d="M33.25 0V304M66.52 0V304M99.79 0V304M133.06 0V304M166.32 0V304M199.59 0V304M232.86 0V304M266.13 0V304M299.40 0V304M0 24.64H327M0 57.92H327M0 91.20H327M0 124.48H327M0 157.76H327M0 191.04H327M0 224.32H327M0 257.60H327M0 290.88H327" stroke="#6a6a6a" stroke-width="1" fill="none"/></svg>
<div class="a" style="left:103.06px;top:64.2px;width:1px;height:1.8px;background:#666"></div>
<div class="a" style="left:109.63px;top:64.2px;width:1px;height:1.8px;background:#666"></div>
<div class="a" style="left:116.19px;top:64.2px;width:1px;height:1.8px;background:#666"></div>
<div class="a" style="left:122.76px;top:64.2px;width:1px;height:1.8px;background:#666"></div>
<div class="a" style="left:129.32px;top:61.6px;width:1px;height:4.4px;background:#555"></div>
<div class="a" style="left:135.89px;top:64.2px;width:1px;height:1.8px;background:#666"></div>
<div class="a" style="left:142.46px;top:64.2px;width:1px;height:1.8px;background:#666"></div>
<div class="a" style="left:149.02px;top:64.2px;width:1px;height:1.8px;background:#666"></div>
<div class="a" style="left:155.59px;top:64.2px;width:1px;height:1.8px;background:#666"></div>
<div class="a" style="left:162.05px;top:57.3px;width:1.4px;height:8.7px;background:#555"></div>
<div class="t" style="left:164.25px;top:57.4px;font-size:7px;color:#2a2a3a;-webkit-text-stroke:0.15px #2a2a3a">10</div>
<div class="a" style="left:168.72px;top:64.2px;width:1px;height:1.8px;background:#666"></div>
<div class="a" style="left:175.28px;top:64.2px;width:1px;height:1.8px;background:#666"></div>
<div class="a" style="left:181.84px;top:64.2px;width:1px;height:1.8px;background:#666"></div>
<div class="a" style="left:188.41px;top:64.2px;width:1px;height:1.8px;background:#666"></div>
<div class="a" style="left:194.98px;top:61.6px;width:1px;height:4.4px;background:#555"></div>
<div class="a" style="left:201.54px;top:64.2px;width:1px;height:1.8px;background:#666"></div>
<div class="a" style="left:208.11px;top:64.2px;width:1px;height:1.8px;background:#666"></div>
<div class="a" style="left:214.67px;top:64.2px;width:1px;height:1.8px;background:#666"></div>
<div class="a" style="left:221.24px;top:64.2px;width:1px;height:1.8px;background:#666"></div>
<div class="a" style="left:227.7px;top:57.3px;width:1.4px;height:8.7px;background:#555"></div>
<div class="t" style="left:229.9px;top:57.4px;font-size:7px;color:#2a2a3a;-webkit-text-stroke:0.15px #2a2a3a">20</div>
<div class="a" style="left:234.37px;top:64.2px;width:1px;height:1.8px;background:#666"></div>
<div class="a" style="left:240.93px;top:64.2px;width:1px;height:1.8px;background:#666"></div>
<div class="a" style="left:247.5px;top:64.2px;width:1px;height:1.8px;background:#666"></div>
<div class="a" style="left:254.06px;top:64.2px;width:1px;height:1.8px;background:#666"></div>
<div class="a" style="left:260.62px;top:61.6px;width:1px;height:4.4px;background:#555"></div>
<div class="a" style="left:267.19px;top:64.2px;width:1px;height:1.8px;background:#666"></div>
<div class="a" style="left:273.75px;top:64.2px;width:1px;height:1.8px;background:#666"></div>
<div class="a" style="left:280.32px;top:64.2px;width:1px;height:1.8px;background:#666"></div>
<div class="a" style="left:286.88px;top:64.2px;width:1px;height:1.8px;background:#666"></div>
<div class="a" style="left:293.35px;top:57.3px;width:1.4px;height:8.7px;background:#555"></div>
<div class="t" style="left:295.55px;top:57.4px;font-size:7px;color:#2a2a3a;-webkit-text-stroke:0.15px #2a2a3a">30</div>
<div class="a" style="left:300.01px;top:64.2px;width:1px;height:1.8px;background:#666"></div>
<div class="a" style="left:306.58px;top:64.2px;width:1px;height:1.8px;background:#666"></div>
<div class="a" style="left:313.14px;top:64.2px;width:1px;height:1.8px;background:#666"></div>
<div class="a" style="left:319.71px;top:64.2px;width:1px;height:1.8px;background:#666"></div>
<div class="a" style="left:326.27px;top:61.6px;width:1px;height:4.4px;background:#555"></div>
<div class="a" style="left:332.84px;top:64.2px;width:1px;height:1.8px;background:#666"></div>
<div class="a" style="left:339.4px;top:64.2px;width:1px;height:1.8px;background:#666"></div>
<div class="a" style="left:345.97px;top:64.2px;width:1px;height:1.8px;background:#666"></div>
<div class="a" style="left:352.54px;top:64.2px;width:1px;height:1.8px;background:#666"></div>
<div class="a" style="left:359.0px;top:57.3px;width:1.4px;height:8.7px;background:#555"></div>
<div class="t" style="left:361.2px;top:57.4px;font-size:7px;color:#2a2a3a;-webkit-text-stroke:0.15px #2a2a3a">40</div>
<div class="a" style="left:365.67px;top:64.2px;width:1px;height:1.8px;background:#666"></div>
<div class="a" style="left:372.23px;top:64.2px;width:1px;height:1.8px;background:#666"></div>
<div class="a" style="left:378.8px;top:64.2px;width:1px;height:1.8px;background:#666"></div>
<div class="a" style="left:385.36px;top:64.2px;width:1px;height:1.8px;background:#666"></div>
<div class="a" style="left:391.93px;top:61.6px;width:1px;height:4.4px;background:#555"></div>
<div class="a" style="left:398.49px;top:64.2px;width:1px;height:1.8px;background:#666"></div>
<div class="a" style="left:405.06px;top:64.2px;width:1px;height:1.8px;background:#666"></div>
<div class="a" style="left:411.62px;top:64.2px;width:1px;height:1.8px;background:#666"></div>
<div class="a" style="left:418.19px;top:64.2px;width:1px;height:1.8px;background:#666"></div>
<div class="a" style="left:424.65px;top:57.3px;width:1.4px;height:8.7px;background:#555"></div>
<div class="t" style="left:426.85px;top:57.4px;font-size:7px;color:#2a2a3a;-webkit-text-stroke:0.15px #2a2a3a">50</div>
<div class="t" style="left:98.8px;top:57.2px;font-size:7px;color:#b86a30">0</div>
<div class="a" style="left:94px;top:74.07px;width:3px;height:1px;background:#666"></div>
<div class="a" style="left:94px;top:80.64px;width:3px;height:1px;background:#666"></div>
<div class="a" style="left:94px;top:87.21px;width:3px;height:1px;background:#666"></div>
<div class="a" style="left:94px;top:93.78px;width:3px;height:1px;background:#666"></div>
<div class="a" style="left:92px;top:100.35px;width:5px;height:1px;background:#666"></div>
<div class="a" style="left:94px;top:106.92px;width:3px;height:1px;background:#666"></div>
<div class="a" style="left:94px;top:113.49px;width:3px;height:1px;background:#666"></div>
<div class="a" style="left:94px;top:120.06px;width:3px;height:1px;background:#666"></div>
<div class="a" style="left:94px;top:126.63px;width:3px;height:1px;background:#666"></div>
<div class="a" style="left:85px;top:133.1px;width:12px;height:1.3px;background:#666"></div>
<div class="a" style="left:94px;top:139.77px;width:3px;height:1px;background:#666"></div>
<div class="a" style="left:94px;top:146.34px;width:3px;height:1px;background:#666"></div>
<div class="a" style="left:94px;top:152.91px;width:3px;height:1px;background:#666"></div>
<div class="a" style="left:94px;top:159.48px;width:3px;height:1px;background:#666"></div>
<div class="a" style="left:92px;top:166.05px;width:5px;height:1px;background:#666"></div>
<div class="a" style="left:94px;top:172.62px;width:3px;height:1px;background:#666"></div>
<div class="a" style="left:94px;top:179.19px;width:3px;height:1px;background:#666"></div>
<div class="a" style="left:94px;top:185.76px;width:3px;height:1px;background:#666"></div>
<div class="a" style="left:94px;top:192.33px;width:3px;height:1px;background:#666"></div>
<div class="a" style="left:85px;top:198.8px;width:12px;height:1.3px;background:#666"></div>
<div class="a" style="left:94px;top:205.47px;width:3px;height:1px;background:#666"></div>
<div class="a" style="left:94px;top:212.04px;width:3px;height:1px;background:#666"></div>
<div class="a" style="left:94px;top:218.61px;width:3px;height:1px;background:#666"></div>
<div class="a" style="left:94px;top:225.18px;width:3px;height:1px;background:#666"></div>
<div class="a" style="left:92px;top:231.75px;width:5px;height:1px;background:#666"></div>
<div class="a" style="left:94px;top:238.32px;width:3px;height:1px;background:#666"></div>
<div class="a" style="left:94px;top:244.89px;width:3px;height:1px;background:#666"></div>
<div class="a" style="left:94px;top:251.46px;width:3px;height:1px;background:#666"></div>
<div class="a" style="left:94px;top:258.03px;width:3px;height:1px;background:#666"></div>
<div class="a" style="left:85px;top:264.5px;width:12px;height:1.3px;background:#666"></div>
<div class="a" style="left:94px;top:271.17px;width:3px;height:1px;background:#666"></div>
<div class="a" style="left:94px;top:277.74px;width:3px;height:1px;background:#666"></div>
<div class="a" style="left:94px;top:284.31px;width:3px;height:1px;background:#666"></div>
<div class="a" style="left:94px;top:290.88px;width:3px;height:1px;background:#666"></div>
<div class="a" style="left:92px;top:297.45px;width:5px;height:1px;background:#666"></div>
<div class="a" style="left:94px;top:304.02px;width:3px;height:1px;background:#666"></div>
<div class="a" style="left:94px;top:310.59px;width:3px;height:1px;background:#666"></div>
<div class="a" style="left:94px;top:317.16px;width:3px;height:1px;background:#666"></div>
<div class="a" style="left:94px;top:323.73px;width:3px;height:1px;background:#666"></div>
<div class="a" style="left:85px;top:330.2px;width:12px;height:1.3px;background:#666"></div>
<div class="a" style="left:94px;top:336.87px;width:3px;height:1px;background:#666"></div>
<div class="a" style="left:94px;top:343.44px;width:3px;height:1px;background:#666"></div>
<div class="a" style="left:94px;top:350.01px;width:3px;height:1px;background:#666"></div>
<div class="a" style="left:94px;top:356.58px;width:3px;height:1px;background:#666"></div>
<div class="a" style="left:92px;top:363.15px;width:5px;height:1px;background:#666"></div>
<div class="t" style="left:84.8px;top:70.20px;font-size:7.3px;color:#111;-webkit-text-stroke:0.2px #111;transform:rotate(-90deg) translate(-100%,0);transform-origin:0 0">100</div>
<div class="t" style="left:84.8px;top:135.90px;font-size:7.3px;color:#111;-webkit-text-stroke:0.2px #111;transform:rotate(-90deg) translate(-100%,0);transform-origin:0 0">90</div>
<div class="t" style="left:84.8px;top:201.60px;font-size:7.3px;color:#111;-webkit-text-stroke:0.2px #111;transform:rotate(-90deg) translate(-100%,0);transform-origin:0 0">80</div>
<div class="t" style="left:84.8px;top:267.30px;font-size:7.3px;color:#111;-webkit-text-stroke:0.2px #111;transform:rotate(-90deg) translate(-100%,0);transform-origin:0 0">70</div>
<div class="t" style="left:84.8px;top:333.00px;font-size:7.3px;color:#111;-webkit-text-stroke:0.2px #111;transform:rotate(-90deg) translate(-100%,0);transform-origin:0 0">60</div>
<div class="a" style="left:424px;top:66px;width:13px;height:304px;background:#ececec"></div>
<div class="a" style="left:425px;top:79px;width:10px;height:129px;background:linear-gradient(90deg,#f2f2f2,#fbfbfb 35%,#ededed 60%,#dcdcdc);border:1px solid #c8c8c8;border-radius:1.5px"></div>
<svg class="a" style="left:428px;top:72px" width="5" height="3" viewBox="0 0 5 3"><path d="M0.3 2.7L2.5 0.5L4.7 2.7" stroke="#555" stroke-width="1" fill="none"/></svg>
<svg class="a" style="left:428px;top:364.5px" width="5" height="3" viewBox="0 0 5 3"><path d="M0 0H5L2.5 3Z" fill="#555"/></svg>
<div class="a" style="left:97px;top:370px;width:327px;height:13px;background:#ececec"></div>
<div class="a" style="left:108px;top:371.3px;width:93px;height:10px;background:linear-gradient(#f6f6f6,#ececec 45%,#d6d6d6);border:1px solid #b8b8b8;border-radius:1.5px"></div>
<svg class="a" style="left:100.5px;top:373.5px" width="3" height="5" viewBox="0 0 3 5"><path d="M3 0V5L0 2.5Z" fill="#333"/></svg>
<svg class="a" style="left:417px;top:374px" width="3" height="5" viewBox="0 0 3 5"><path d="M0 0V5L3 2.5Z" fill="#555"/></svg>
<svg class="a" style="left:151.5px;top:373.8px" width="6" height="5" viewBox="0 0 6 5"><path d="M0.5 0V5M2 0V5M3.5 0V5M5 0V5" stroke="#666" stroke-width="0.7"/></svg>
<div class="a" style="left:80px;top:383px;width:357px;height:13px;background:#f4f4f4;border-top:1px solid #a8a8a8"></div>
<svg class="a" style="left:84px;top:383px" width="40" height="13" viewBox="0 0 40 13"><path d="M0.5 0.5L4 11.5Q4.5 12.5 6 12.5H32Q33.5 12.5 34 11.5L38 0.5" fill="#fff" stroke="#8a8a8a" stroke-width="1"/><rect x="1" y="0" width="36.5" height="1" fill="#fff"/></svg>
<div class="t" style="left:89.5px;top:385.8px;font-size:7.4px;color:#1a1a1a;-webkit-text-stroke:0.15px #1a1a1a">Плата 1</div>
<div class="a" style="left:435px;top:54px;width:2px;height:342px;background:#fafafa"></div>
<div class="a" style="left:437px;top:54px;width:4.5px;height:342px;background-color:#fbfbfb;background-image:linear-gradient(45deg,#d8d8d8 25%,transparent 25%,transparent 75%,#d8d8d8 75%),linear-gradient(45deg,#d8d8d8 25%,transparent 25%,transparent 75%,#d8d8d8 75%);background-size:2.6px 2.6px;background-position:0 0,1.3px 1.3px"></div>
<svg class="a" style="left:428px;top:141px" width="5" height="5" viewBox="0 0 5 5"><path d="M0.5 0.5H4.5M0.5 2.5H4.5M0.5 4.5H4.5" stroke="#888" stroke-width="0.8"/></svg>
<div class="a" style="left:441px;top:54px;width:153px;height:342px;background:#f0f0f0"></div>
<div class="a" style="left:441px;top:53.5px;width:153px;height:12px;background:#000"></div>
<div class="t" style="left:496.2px;top:55.4px;font-size:8.4px;color:#f06464">Макросы</div>
<div class="a" style="left:583px;top:54px;width:11px;height:11px;background:#fff;border:1px solid #aaa"></div>
<svg class="a" style="left:585.3px;top:56.6px" width="6.5" height="6" viewBox="0 0 6.5 6"><path d="M0.6 0.6L5.9 5.4M5.9 0.6L0.6 5.4" stroke="#000" stroke-width="1.3"/></svg>
<div class="a" style="left:441px;top:65.5px;width:153px;height:98px;background:#fff;border:1px solid #d0d0d0;border-bottom:none"></div>
<div class="a" style="left:441px;top:163px;width:153px;height:1px;background:repeating-linear-gradient(90deg,#b8b8b8 0,#b8b8b8 1px,transparent 1px,transparent 2px)"></div>
<div class="a" style="left:449.7px;top:76.6px;width:1px;height:4.6px;background:repeating-linear-gradient(#aaa 0,#aaa 1px,transparent 1px,transparent 2px)"></div>
<div class="a" style="left:447px;top:70.2px;width:6.5px;height:6.5px;border:1px solid #a0aec0;background:linear-gradient(#fff,#e4eaf2)"></div>
<div class="a" style="left:448.7px;top:73.0px;width:3.2px;height:1px;background:#3a5a98"></div>
<div class="a" style="left:449.8px;top:71.9px;width:1px;height:3.2px;background:#3a5a98"></div>
<div class="a" style="left:453.5px;top:73.3px;width:3px;height:1px;background:repeating-linear-gradient(90deg,#999 0,#999 1px,transparent 1px,transparent 2px)"></div>
<div class="t" style="left:457px;top:70.8px;font-size:7.1px;color:#111">SMD</div>
<div class="a" style="left:449.7px;top:87.2px;width:1px;height:4.6px;background:repeating-linear-gradient(#aaa 0,#aaa 1px,transparent 1px,transparent 2px)"></div>
<div class="a" style="left:447px;top:80.8px;width:6.5px;height:6.5px;border:1px solid #a0aec0;background:linear-gradient(#fff,#e4eaf2)"></div>
<div class="a" style="left:448.7px;top:83.6px;width:3.2px;height:1px;background:#3a5a98"></div>
<div class="a" style="left:449.8px;top:82.5px;width:1px;height:3.2px;background:#3a5a98"></div>
<div class="a" style="left:453.5px;top:83.9px;width:3px;height:1px;background:repeating-linear-gradient(90deg,#999 0,#999 1px,transparent 1px,transparent 2px)"></div>
<div class="t" style="left:457px;top:81.4px;font-size:7.1px;color:#111">Symbols</div>
<div class="a" style="left:449.7px;top:97.8px;width:1px;height:4.6px;background:repeating-linear-gradient(#aaa 0,#aaa 1px,transparent 1px,transparent 2px)"></div>
<div class="a" style="left:447px;top:91.4px;width:6.5px;height:6.5px;border:1px solid #a0aec0;background:linear-gradient(#fff,#e4eaf2)"></div>
<div class="a" style="left:448.7px;top:94.2px;width:3.2px;height:1px;background:#3a5a98"></div>
<div class="a" style="left:449.8px;top:93.1px;width:1px;height:3.2px;background:#3a5a98"></div>
<div class="a" style="left:453.5px;top:94.5px;width:3px;height:1px;background:repeating-linear-gradient(90deg,#999 0,#999 1px,transparent 1px,transparent 2px)"></div>
<div class="t" style="left:457px;top:92.0px;font-size:7.1px;color:#111">Through-Hole (TH)</div>
<div class="a" style="left:447px;top:102.0px;width:6.5px;height:6.5px;border:1px solid #a0aec0;background:linear-gradient(#fff,#e4eaf2)"></div>
<div class="a" style="left:448.7px;top:104.8px;width:3.2px;height:1px;background:#3a5a98"></div>
<div class="a" style="left:449.8px;top:103.7px;width:1px;height:3.2px;background:#3a5a98"></div>
<div class="a" style="left:453.5px;top:105.1px;width:3px;height:1px;background:repeating-linear-gradient(90deg,#999 0,#999 1px,transparent 1px,transparent 2px)"></div>
<div class="t" style="left:457px;top:102.6px;font-size:7.1px;color:#111">USER</div>
<div class="a" style="left:443px;top:169px;width:9px;height:9px;border:1px solid #8f8f8f;background:linear-gradient(#e8e8e8,#fff)"></div>
<svg class="a" style="left:444px;top:170px" width="7" height="7" viewBox="0 0 7 7"><path d="M1 3.5L2.8 5.8L6 0.8" stroke="#2a3a8a" stroke-width="1.1" fill="none"/></svg>
<div class="t" style="left:454px;top:169.2px;font-size:7.2px;color:#1a1a1a">Как компонент</div>
<svg class="a" style="left:443px;top:182px" width="11" height="11" viewBox="0 0 11 11"><rect x="0" y="0" width="11" height="11" rx="1" fill="#1a237e"/><rect x="2" y="1" width="7" height="4" fill="#fff"/><rect x="3" y="7" width="5" height="4" fill="#c8c8d8"/></svg>
<svg class="a" style="left:459px;top:182px" width="9" height="11" viewBox="0 0 9 11"><rect x="3" y="0" width="3" height="1.5" fill="#444"/><rect x="0" y="1.5" width="9" height="2" fill="#444"/><path d="M1 4H8L7.5 11H1.5Z" fill="#555"/><path d="M3 5V10M4.5 5V10M6 5V10" stroke="#bbb" stroke-width="0.6"/></svg>
<svg class="a" style="left:535px;top:182px" width="11" height="11" viewBox="0 0 11 11"><path d="M9 5.5A3.6 3.6 0 1 1 7.5 2.6" stroke="#000" stroke-width="1.8" fill="none"/><path d="M5.8 0.5L10 0.5L10 4.6Z" fill="#000"/></svg>
<svg class="a" style="left:551px;top:183px" width="8" height="8" viewBox="0 0 8 8"><circle cx="4" cy="4" r="4" fill="#000"/><circle cx="4" cy="4" r="1.5" fill="#e01010"/></svg>
<svg class="a" style="left:564px;top:182px" width="11" height="11" viewBox="0 0 11 11"><path d="M5.5 0V5M3.5 3L5.5 5L7.5 3" stroke="#000" stroke-width="1.2" fill="none"/><path d="M5.5 5.5L10.5 10.5H0.5Z" fill="#333"/><rect x="0" y="10" width="11" height="1" fill="#000"/></svg>
<div class="t" style="left:576px;top:184px;font-size:7.2px;color:#1a1a1a">Верх</div>
<div class="a" style="left:441px;top:194.5px;width:153px;height:1px;background:#bdbdbd"></div>
<div class="a" style="left:441px;top:195.5px;width:153px;height:1px;background:#fff"></div>
<div class="a" style="left:441px;top:196px;width:153px;height:20px;background:#ececec;border-top:1px solid #fff;border-left:1px solid #fff"></div>
<div class="a" style="left:441.5px;top:216px;width:152.5px;height:180px;background:#000"></div>
<div class="t" style="left:520px;top:388.2px;font-size:7.1px;color:#bdbdbd">Нажать и перенести</div>
<div class="a" style="left:6px;top:396px;width:588px;height:25px;background:#f0f0f0;border-top:1px solid #d8d8d8"></div>
<div class="a" style="left:7px;top:396.5px;width:57px;height:24.5px;background:#f3f3f3;border:1px solid #c4c4c4"></div>
<div class="t" style="left:11px;top:400.7px;font-size:7.2px;color:#3a3a3a">X:</div>
<div class="t" style="left:11px;top:410.5px;font-size:7.2px;color:#3a3a3a">Y:</div>
<div class="t" style="left:26px;top:400.7px;font-size:7.2px;color:#3a3a3a">49,800 мм</div>
<div class="t" style="left:26px;top:410.5px;font-size:7.2px;color:#3a3a3a">95,800 мм</div>
<div class="a" style="left:64px;top:397px;width:33px;height:12px;background:#f0f0f0;border:1px solid #d0d0d0"></div>
<div class="a" style="left:64px;top:408.5px;width:33px;height:12.5px;background:#f0f0f0;border:1px solid #d0d0d0"></div>
<div class="t" style="left:64.5px;top:398.8px;font-size:7.3px;color:#1a1a1a;-webkit-text-stroke:0.15px #1a1a1a">видимая</div>
<div class="t" style="left:64.5px;top:411px;font-size:7.3px;color:#1a1a1a;-webkit-text-stroke:0.15px #1a1a1a">активная</div>
<div class="a" style="left:97px;top:397px;width:78.5px;height:11.5px;background:#000"></div>
<div class="t" style="left:97.0px;top:399px;width:15.7px;text-align:center;font-size:8px;font-weight:bold;color:#3060e0">Ф1</div>
<div class="a" style="left:97.0px;top:408.5px;width:15.7px;height:12.5px;border:1px solid #d4d4d4;background:#f0f0f0"></div>
<div class="a" style="left:99.55px;top:410.3px;width:8.5px;height:8.5px;border-radius:50%;border:1px solid #bcbcbc;background:linear-gradient(#e0e0e0,#f6f6f6)"></div>
<div class="t" style="left:112.7px;top:399px;width:15.7px;text-align:center;font-size:8px;font-weight:bold;color:#e02828">Ш1</div>
<div class="a" style="left:112.7px;top:408.5px;width:15.7px;height:12.5px;border:1px solid #d4d4d4;background:#f0f0f0"></div>
<div class="a" style="left:115.05px;top:410.3px;width:8.5px;height:8.5px;border-radius:50%;border:1px solid #bcbcbc;background:linear-gradient(#e0e0e0,#f6f6f6)"></div>
<div class="t" style="left:128.4px;top:399px;width:15.7px;text-align:center;font-size:8px;font-weight:bold;color:#28b028">Ф2</div>
<div class="a" style="left:128.4px;top:408.5px;width:15.7px;height:12.5px;border:1px solid #d4d4d4;background:#f0f0f0"></div>
<div class="a" style="left:130.55px;top:410.3px;width:8.5px;height:8.5px;border-radius:50%;border:1px solid #9aa8b8;background:radial-gradient(circle,#1a5a7a 0,#2a7aa0 1.3px,#5a9ab8 2px,#d8e4ec 2.8px,#eef2f6 3.5px)"></div>
<div class="t" style="left:144.1px;top:399px;width:15.7px;text-align:center;font-size:8px;font-weight:bold;color:#d8c828">Ш2</div>
<div class="a" style="left:144.1px;top:408.5px;width:15.7px;height:12.5px;border:1px solid #d4d4d4;background:#f0f0f0"></div>
<div class="a" style="left:146.05px;top:410.3px;width:8.5px;height:8.5px;border-radius:50%;border:1px solid #bcbcbc;background:linear-gradient(#e0e0e0,#f6f6f6)"></div>
<div class="t" style="left:159.8px;top:399px;width:15.7px;text-align:center;font-size:8px;font-weight:bold;color:#ece4d8">К</div>
<div class="a" style="left:159.8px;top:408.5px;width:15.7px;height:12.5px;border:1px solid #d4d4d4;background:#f0f0f0"></div>
<div class="a" style="left:161.55px;top:410.3px;width:8.5px;height:8.5px;border-radius:50%;border:1px solid #bcbcbc;background:linear-gradient(#e0e0e0,#f6f6f6)"></div>
<div class="t" style="left:178.5px;top:407px;font-size:7px;color:#333">?</div>
<div class="a" style="left:188px;top:396.5px;width:24px;height:24px;border:1px solid #d4d4d4;border-top-color:#c8c8c8;background:#f0f0f0"></div>
<div class="a" style="left:215px;top:396.5px;width:24px;height:24px;border:1px solid #d4d4d4;border-top-color:#c8c8c8;background:#f0f0f0"></div>
<div class="a" style="left:242px;top:396.5px;width:24px;height:24px;border:1px solid #d4d4d4;border-top-color:#c8c8c8;background:#f0f0f0"></div>
<svg class="a" style="left:192px;top:400.5px" width="17" height="17" viewBox="0 0 17 17"><rect width="17" height="17" fill="#6c6c6c"/><path d="M0 4.5H5.5L11 10" stroke="#fff" stroke-width="4.2" fill="none"/><path d="M0 4.5H5.5L11 10" stroke="#000" stroke-width="2.2" fill="none"/><circle cx="11.5" cy="11" r="3" fill="#000" stroke="#fff" stroke-width="1.3"/><circle cx="11.5" cy="11" r="1.1" fill="#fff"/></svg>
<svg class="a" style="left:217px;top:398px" width="21" height="21" viewBox="0 0 21 21"><circle cx="9.5" cy="10.5" r="4.2" fill="#000"/><path d="M9.5 2V19M1 10.5H19" stroke="#ff4a5a" stroke-width="1.7"/><circle cx="9.5" cy="10.5" r="1" fill="#ff9090"/></svg>
<svg class="a" style="left:244px;top:399px" width="20" height="19" viewBox="0 0 20 19"><path d="M3 14Q1 11 5 8L13 3.5Q17 2 17.5 4.5Q18 7 14 9.5L6 14Q4 15 3 14Z" fill="none" stroke="#333" stroke-width="2.2"/><path d="M2 2L18 17M17 2L3 17" stroke="#e82020" stroke-width="1.6"/></svg>
<div class="a" style="left:269px;top:396.5px;width:325px;height:24.5px;border:1px solid #d4d4d4;background:#f0f0f0"></div>
<div class="a" style="left:272px;top:406.8px;width:314px;height:1.5px;background:#c8c8c8"></div>
<div class="a" style="left:272px;top:408.3px;width:314px;height:1px;background:#fff"></div>
<svg class="a" style="left:586px;top:413px" width="7" height="7" viewBox="0 0 7 7"><g fill="#a8a8a8"><rect x="5" y="1" width="1" height="1"/><rect x="3" y="3" width="1" height="1"/><rect x="5" y="3" width="1" height="1"/><rect x="1" y="5" width="1" height="1"/><rect x="3" y="5" width="1" height="1"/><rect x="5" y="5" width="1" height="1"/></g></svg>
</body></html>
